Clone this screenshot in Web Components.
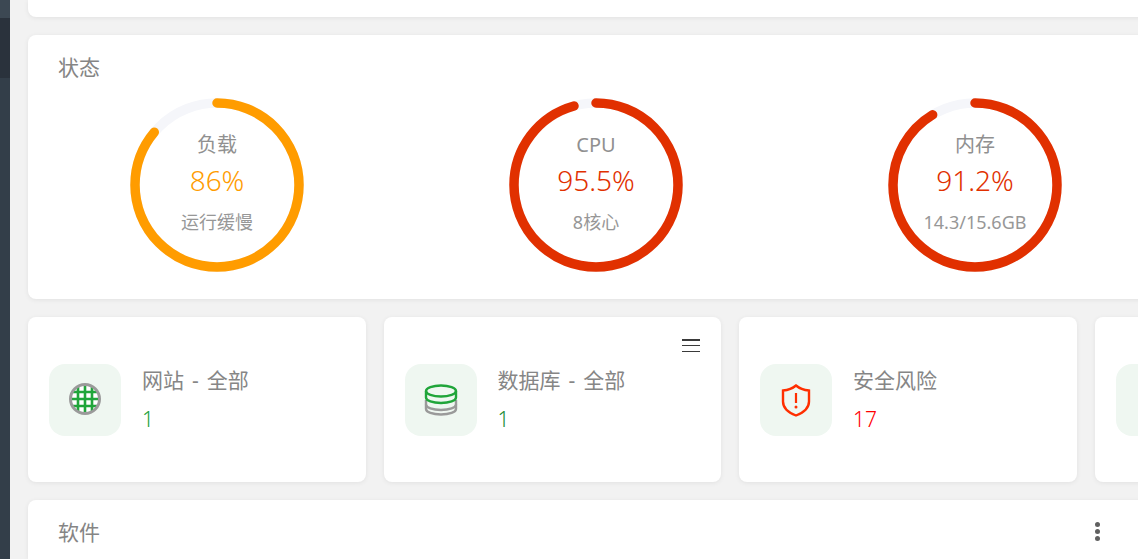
<!DOCTYPE html>
<html lang="zh"><head><meta charset="utf-8">
<style>
html,body{margin:0;height:100%;overflow:hidden;background:#f2f2f2}
body{font-family:"Noto Sans","Noto Sans CJK SC",sans-serif;display:flex}
</style></head><body>
<side-rail></side-rail>
<main-area>
  <panel-card style="height:17px" data-flat="1"></panel-card>
  <panel-card style="height:264px">
    <card-title>状态</card-title>
    <ring-row>
      <status-ring pct="86" color="#ff9c00" label="负载" value="86%" note="运行缓慢"></status-ring>
      <status-ring pct="95.5" color="#e13000" label="CPU" value="95.5%" note="8核心"></status-ring>
      <status-ring pct="91.2" color="#e13000" label="内存" value="91.2%" note="14.3/15.6GB"></status-ring>
      <status-ring pct="0" color="#e13000" label="" value="" note=""></status-ring>
    </ring-row>
  </panel-card>
  <stat-row>
    <stat-card label="网站 - 全部" value="1" color="#1aa23a">
      <svg slot="icon" width="36" height="36" viewBox="0 0 36 36" fill="none" style="margin-top:-2px;margin-left:-1px"><circle cx="18" cy="18" r="14.5" fill="#fff"/><g stroke="#20a53a" stroke-width="2.6"><path d="M11 5.500v25M18 4.500v27M25 5.500v25M5.500 11h25M4.500 18h27M5.500 25h25"/></g><circle cx="18" cy="18" r="14.500" stroke="#9a9a9a" stroke-width="3"/></svg>
    </stat-card>
    <stat-card label="数据库 - 全部" value="1" color="#1a8a35" menu="1">
      <svg slot="icon" width="36" height="36" viewBox="0 0 36 36" fill="none" stroke-width="2.4"><path d="M3 18v9c0 3.200 6.700 5.500 15 5.500s15-2.300 15-5.500v-9" stroke="#9a9a9a"/><path d="M3 22.500c0 3.200 6.700 5.500 15 5.500s15-2.300 15-5.500" stroke="#9a9a9a"/><ellipse cx="18" cy="9" rx="15" ry="5.500" stroke="#20a53a"/><path d="M3 9v6.500c0 3.200 6.700 5.500 15 5.500s15-2.300 15-5.500V9" stroke="#20a53a"/></svg>
    </stat-card>
    <stat-card label="安全风险" value="17" color="#ff0000">
      <svg slot="icon" width="36" height="36" viewBox="0 0 36 36" fill="none"><path d="M18 3.500c3.500 3 7.500 4.500 13 5v11c0 6.500-5 11-13 14-8-3-13-7.500-13-14v-11c5.500-.5 9.500-2 13-5z" stroke="#ff2e00" stroke-width="2.400"/><path d="M18 11v10" stroke="#ff2e00" stroke-width="2.200"/><circle cx="18" cy="25" r="1.500" fill="#ff2e00"/></svg>
    </stat-card>
    <stat-card label="" value="" color="#1aa23a"></stat-card>
  </stat-row>
  <panel-card style="height:59px" data-open="1">
    <card-title>软件</card-title>
    <dot-menu></dot-menu>
  </panel-card>
</main-area>
<script>
const def=(n,html)=>customElements.define(n,class extends HTMLElement{
  connectedCallback(){ if(this.shadowRoot) return; const s=this.attachShadow({mode:'open'}); s.innerHTML=typeof html==='function'?html(this):html; }
});
def('side-rail',`<style>:host{display:flex;flex-direction:column;flex:0 0 10px;width:10px;height:559px;background:#333e49}
.a{height:18px;background:#3c4853}.b{height:60px;background:#2a323c}</style><div class="a"></div><div class="b"></div>`);
def('main-area',`<style>:host{display:flex;flex-direction:column;align-self:flex-start;gap:18px;flex:0 0 1404px;width:1404px;margin-left:18px}
::slotted(*){flex:none}</style><slot></slot>`);
def('panel-card',`<style>:host{display:block;position:relative;box-sizing:border-box;background:#fff;border-radius:8px;box-shadow:0 1px 5px rgba(0,0,0,.07)}
:host([data-flat]){border-radius:0 0 8px 8px}:host([data-open]){border-radius:8px 8px 0 0}</style><slot></slot>`);
def('card-title',`<style>:host{display:block;padding:18px 30px 0;font-size:21px;line-height:28px;color:#858585}</style><slot></slot>`);
def('ring-row',`<style>:host{display:grid;grid-template-columns:repeat(4,379px);padding:17px 0 0 0}</style><slot></slot>`);
def('status-ring',h=>{
  const p=+h.getAttribute('pct'),c=h.getAttribute('color'),R=82,L=2*Math.PI*R;
  const arc=p?`<circle cx="87" cy="87" r="${R}" fill="none" stroke="${c}" stroke-width="9.500" stroke-linecap="round" stroke-dasharray="${L*p/100} ${L}" transform="rotate(-90 87 87)"/>`:'';
  return `<style>:host{display:flex;justify-content:center;width:379px}
.w{position:relative;width:174px;height:174px;margin-left:-1px}
svg{position:absolute;inset:0}
.t{position:absolute;inset:0;display:flex;flex-direction:column;align-items:center;text-align:center}
.l{margin-top:32px;font-size:20px;line-height:30px;color:#909090}
.v{margin-top:2px;font-size:28px;line-height:36px;font-weight:300;color:${c}}
.n{margin-top:10px;font-size:18px;line-height:28px;color:#979797}</style>
<div class="w"><svg width="174" height="174"><circle cx="87" cy="87" r="${R}" fill="none" stroke="#f5f6fa" stroke-width="9.500"/>${arc}</svg>
<div class="t"><div class="l">${h.getAttribute('label')}</div><div class="v">${h.getAttribute('value')}</div><div class="n">${h.getAttribute('note')}</div></div></div>`;
});
def('stat-row',`<style>:host{display:grid;grid-template-columns:repeat(4,337.5px);gap:18px}</style><slot></slot>`);
def('stat-card',h=>`<style>:host{display:flex;align-items:center;position:relative;height:165px;box-sizing:border-box;padding:0 21px;background:#fff;border-radius:8px;box-shadow:0 1px 5px rgba(0,0,0,.07)}
.i{flex:0 0 72px;height:72px;border-radius:16px;background:#eff7f1;display:flex;align-items:center;justify-content:center}
.x{margin-left:21px}.l{font-size:21px;line-height:30px;color:#868686;word-spacing:2.500px}.v{margin-top:9px;font-size:21px;line-height:30px;font-weight:300;color:${h.getAttribute('color')}}
.m{position:absolute;top:22px;right:21px;width:18px;height:13px;display:flex;flex-direction:column;justify-content:space-between}
.m i{display:block;height:1.5px;background:#3a3a3a}</style>
<div class="i"><slot name="icon"></slot></div><div class="x"><div class="l">${h.getAttribute('label')}</div><div class="v">${h.getAttribute('value')}</div></div>
${h.hasAttribute('menu')?'<div class="m"><i></i><i></i><i></i></div>':''}`);
def('dot-menu',`<style>:host{position:absolute;left:1067px;top:22px;display:flex;flex-direction:column;gap:2px}i{display:block;width:5px;height:5px;border-radius:50%;background:#606060}</style><i></i><i></i><i></i>`);
</script>
</body></html>
